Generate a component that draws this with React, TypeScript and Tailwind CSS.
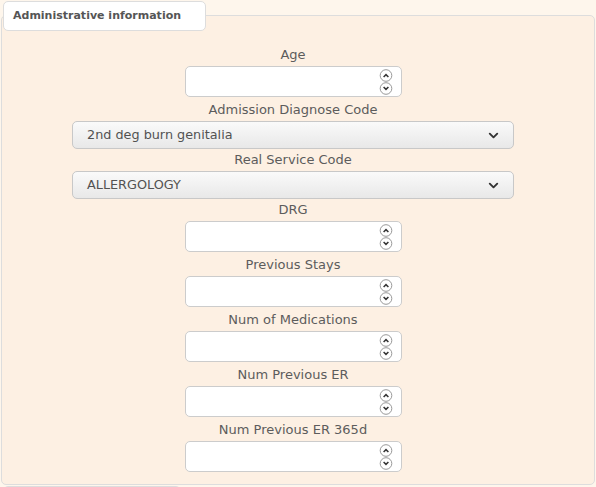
import { ChevronDown } from "lucide-react";

const Spinner = () => {
  return (
    <svg width="14" height="28" viewBox="0 0 14 28" className="shrink-0">
      <circle cx="7" cy="7.5" r="5.8" fill="white" stroke="#999" strokeWidth="1" />
      <path d="M4.6 9 L7 6.6 L9.4 9" fill="none" stroke="#333" strokeWidth="1.5" />
      <circle cx="7" cy="20.5" r="5.8" fill="white" stroke="#999" strokeWidth="1" />
      <path d="M4.6 19 L7 21.4 L9.4 19" fill="none" stroke="#333" strokeWidth="1.5" />
    </svg>
  );
};

const NumberField = ({ label }: { label: string }) => {
  return (
    <div className="flex flex-col items-center">
      <div className="h-4 leading-4 text-[13px] text-[#5c5c5c]">{label}</div>
      <div className="mt-[3px] mb-[5px] flex h-[31px] w-[217px] items-center justify-end rounded-[5px] border border-[#ccc] bg-white pr-[8px]">
        <Spinner />
      </div>
    </div>
  );
};

const SelectField = ({ label, value }: { label: string; value: string }) => {
  return (
    <div className="flex flex-col items-center">
      <div className="h-4 leading-4 text-[13px] text-[#5c5c5c]">{label}</div>
      <div className="mt-[3px] mb-[3px] flex h-[28px] w-[442px] items-center justify-between rounded-[5px] border border-[#c8c8c8] bg-gradient-to-b from-[#fafafa] to-[#e8e8e8] pl-[14px] pr-[12px] text-[12.8px] text-[#525252]">
        <span>{value}</span>
        <ChevronDown size={15} strokeWidth={3} className="text-[#333]" />
      </div>
    </div>
  );
};

const App = () => {
  return (
    <div className="h-[487px] overflow-hidden bg-[#fef6ec] pt-px font-['DejaVu_Sans',sans-serif]">
      <div className="relative z-10 ml-[3px] flex h-[30px] w-[203px] items-center rounded-[5px] border border-[#ddd] bg-white pl-[9px] text-[11px] font-bold text-[#555]">
        Administrative information
      </div>
      <div className="mx-px -mt-[16px] rounded-[5px] border border-[#ddd] bg-[#fdf0e3] pt-[31px] pr-[10px] pb-[7px]">
        <NumberField label="Age" />
        <SelectField label="Admission Diagnose Code" value="2nd deg burn genitalia" />
        <SelectField label="Real Service Code" value="ALLERGOLOGY" />
        <NumberField label="DRG" />
        <NumberField label="Previous Stays" />
        <NumberField label="Num of Medications" />
        <NumberField label="Num Previous ER" />
        <NumberField label="Num Previous ER 365d" />
      </div>
      <div className="ml-[3px] mt-px h-[30px] w-[178px] rounded-[5px] border border-[#ddd] bg-white" />
    </div>
  );
};

export default App;
